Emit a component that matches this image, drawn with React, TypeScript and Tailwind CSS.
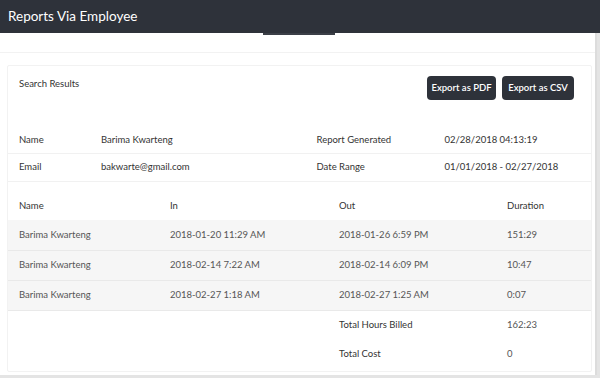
const rows = [
  { name: "Barima Kwarteng", inTime: "2018-01-20 11:29 AM", outTime: "2018-01-26 6:59 PM", duration: "151:29" },
  { name: "Barima Kwarteng", inTime: "2018-02-14 7:22 AM", outTime: "2018-02-14 6:09 PM", duration: "10:47" },
  { name: "Barima Kwarteng", inTime: "2018-02-27 1:18 AM", outTime: "2018-02-27 1:25 AM", duration: "0:07" },
];

export default function App() {
  return (
    <div
      className="w-[600px] h-[378px] bg-[#e4e4e4] overflow-hidden text-[#333]"
      style={{ fontFamily: "Lato, 'Liberation Sans', sans-serif" }}
    >
      {/* Title bar */}
      <div className="h-[33px] bg-[#2e323a] flex items-center pl-2">
        <h1 className="text-white text-[13.5px]">Reports Via Employee</h1>
      </div>

      <div className="w-[597px] h-[342px] bg-white border-r-2 border-[#dcdcdc]">
        {/* tab strip */}
        <div className="h-[20px] border-b border-[#f2f2f2] relative">
          <div className="absolute left-[263px] top-0 w-[72px] h-[2px] bg-[#3b3f47]" />
        </div>

        <div className="pl-[7px] pr-[3px] pt-[12px]">
          <div className="h-[307px] border border-[#f2f2f2] rounded-[2px]">
            {/* Card head */}
            <div className="flex justify-between items-start pl-[11px] pr-[17px] pt-[10px] h-[61px]">
              <span className="text-[9.5px] mt-[1px]">Search Results</span>
              <div className="flex gap-[6px]">
                <button className="bg-[#2e323a] text-white text-[9.5px] font-semibold rounded-[4px] w-[69px] h-[24px]">
                  Export as PDF
                </button>
                <button className="bg-[#2e323a] text-white text-[9.5px] font-semibold rounded-[4px] w-[72px] h-[24px]">
                  Export as CSV
                </button>
              </div>
            </div>

            {/* Info grid */}
            <div className="grid grid-cols-2 text-[9.5px]">
              <div>
                <div className="h-[27px] flex items-center border-b border-[#f1f1f1] pl-[11px]">
                  <span className="w-[82px]">Name</span>
                  <span>Barima Kwarteng</span>
                </div>
                <div className="h-[28px] flex items-center border-b border-[#f1f1f1] pl-[11px]">
                  <span className="w-[82px]">Email</span>
                  <span>bakwarte@gmail.com</span>
                </div>
              </div>
              <div>
                <div className="h-[27px] flex items-center border-b border-[#f1f1f1] pl-[17px]">
                  <span className="w-[128px]">Report Generated</span>
                  <span>02/28/2018 04:13:19</span>
                </div>
                <div className="h-[28px] flex items-center border-b border-[#f1f1f1] pl-[17px]">
                  <span className="w-[128px]">Date Range</span>
                  <span>01/01/2018 - 02/27/2018</span>
                </div>
              </div>
            </div>

            {/* Table */}
            <table className="w-full text-[9.5px] border-collapse">
              <thead>
                <tr className="h-[38px]">
                  <th className="w-[151px] text-left font-normal pl-[11px] pt-[10px]">Name</th>
                  <th className="w-[169px] text-left font-normal pl-[11px] pt-[10px]">In</th>
                  <th className="w-[168px] text-left font-normal pl-[11px] pt-[10px]">Out</th>
                  <th className="text-left font-normal pl-[11px] pt-[10px]">Duration</th>
                </tr>
              </thead>
              <tbody>
                {rows.map((r, i) => (
                  <tr key={i} className="h-[30px] bg-[#f6f6f6] border-b border-[#e9e9e9] last:border-b-0 text-[#555]">
                    <td className="pl-[11px]">{r.name}</td>
                    <td className="pl-[11px]">{r.inTime}</td>
                    <td className="pl-[11px]">{r.outTime}</td>
                    <td className="pl-[11px]">{r.duration}</td>
                  </tr>
                ))}
                <tr className="h-[30px]">
                  <td />
                  <td />
                  <td className="pl-[11px]">Total Hours Billed</td>
                  <td className="pl-[11px] text-[#555]">162:23</td>
                </tr>
                <tr className="h-[29px]">
                  <td />
                  <td />
                  <td className="pl-[11px]">Total Cost</td>
                  <td className="pl-[11px] text-[#555]">0</td>
                </tr>
              </tbody>
            </table>
          </div>
        </div>
      </div>
    </div>
  );
}
